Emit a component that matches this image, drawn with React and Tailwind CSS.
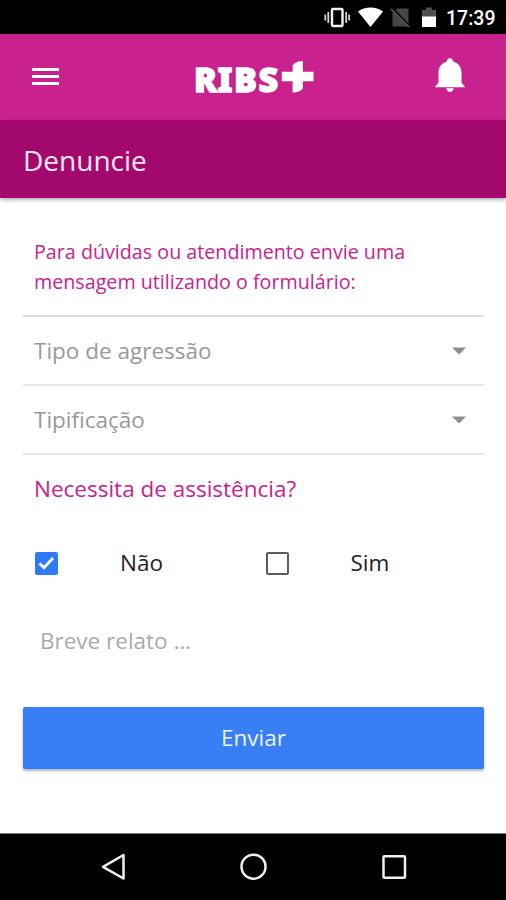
import React, { useState } from "react";

function StatusBar() {
    return (
        <div className="h-[34px] bg-black flex items-center justify-end pr-[11px] text-white">
            <svg width="114" height="34" viewBox="324 0 114 34" fill="none">
                <rect x="332" y="9" width="10.5" height="17" rx="1" stroke="#f2f2f2" strokeWidth="2.4" />
                <path d="M328.3 12v11M325.3 14.5v6M346.2 12v11M349.2 14.5v6" stroke="#d5d5d5" strokeWidth="1.8" />
                <path d="M358 11.5C365 6 376 6 383 11.5L370.5 27z" fill="#fff" />
                <path d="M397 8.5h11.5v18h-16v-13z" fill="#464646" />
                <path d="M391.5 8l18.5 19" stroke="#000" strokeWidth="3" />
                <path d="M391 9l18 18" stroke="#505050" strokeWidth="1.8" />
                <path d="M426 7.500h6v2.500h4v7h-14v-7h4z" fill="#505050" />
                <path d="M422 16.500h14v10.500h-14z" fill="#fff" />
            </svg>
            <span className="ml-2 mt-[3px] w-[49px] font-['Roboto'] text-[19.500px] font-medium leading-none whitespace-nowrap">
                17:39
            </span>
        </div>
    );
}

function Logo() {
    return (
        <svg width="140" height="60" viewBox="184 48 140 60" className="overflow-visible">
            <text
                y="92.500"
                fill="#fff"
                stroke="#fff"
                strokeWidth="1.400"
                className="font-['Noto_Sans',sans-serif] text-[34px] leading-none font-black"
            >
                <tspan x="194">R</tspan>
                <tspan x="217.500">I</tspan>
                <tspan x="234">B</tspan>
                <tspan x="258.500">S</tspan>
            </text>
            <path
                d="M302.800 62v10.700h10.700v9.600h-10.700v7q-3 4.300-10.200 4.300v-11.300h-10.800v-9.600h10.800v-6.200q3-4.500 10.200-4.500z"
                fill="#fff"
            />
        </svg>
    );
}

function Header() {
    return (
        <header className="h-[86px] bg-[#c9228e] flex items-center justify-between pl-8 pr-[38px]">
            <button aria-label="Menu">
                <svg width="27" height="20" viewBox="0 0 27 20" className="block">
                    <path d="M0 2.500h27M0 9.500h27M0 16.500h27" stroke="#fff" strokeWidth="3.200" />
                </svg>
            </button>
            <div className="pl-4">
                <Logo />
            </div>
            <button aria-label="Notificações">
                <svg width="36" height="38" viewBox="432 57.500 36 38" className="block" fill="#fff">
                    <path d="M450 57.800c-2 0-3.200 1.300-3.200 3.300-5 1.500-8.300 5.600-8.300 11v9.400c0 1.600-3.500 4.300-3.500 5.300h30c0-1-3.500-3.700-3.500-5.300v-9.400c0-5.400-3.300-9.500-8.300-11 0-2-1.200-3.300-3.200-3.300z" />
                    <path d="M446.300 87.800h7.400c-.8 5-6.600 5-7.400 0z" />
                </svg>
            </button>
        </header>
    );
}

function SelectRow({ label }) {
    return (
        <div className="h-[69px] border-b-2 border-[#e9e9e9] flex items-center justify-between pl-[11px] pr-[18px] text-[#999]">
            <span className="text-[22.500px]">{label}</span>
            <svg width="14" height="8" viewBox="0 0 14 8">
                <path d="M0 0.500h14L7 7.500z" fill="#8d8d8d" />
            </svg>
        </div>
    );
}

function CheckOption({ label, checked, onChange }) {
    return (
        <button onClick={onChange} className="w-[230.500px] flex items-center pl-3 text-left">
            {checked ? (
                <span className="w-[23px] h-[23px] rounded-[2px] bg-[#2f7bf6] flex items-center justify-center">
                    <svg width="17" height="14" viewBox="0 0 17 14" fill="none">
                        <path d="M1.500 7.500l4.500 4.200L15 2" stroke="#fff" strokeWidth="2.800" />
                    </svg>
                </span>
            ) : (
                <span className="w-[23px] h-[23px] rounded-[2px] border-2 border-[#5c5c5c]" />
            )}
            <span className="ml-[62px] text-[22.500px] text-[#222]">{label}</span>
        </button>
    );
}

function NavBar() {
    return (
        <div className="h-[67px] bg-black border-t border-[#777]">
            <svg width="506" height="66" viewBox="0 834 506 66" fill="none" stroke="#f0f0f0" strokeWidth="2.500">
                <path d="M123.500 855v23.500L103 866.800z" strokeLinejoin="round" />
                <circle cx="253.500" cy="866.700" r="12" />
                <rect x="383.500" y="856.200" width="21.500" height="21.500" rx="1" />
            </svg>
        </div>
    );
}

export default function App() {
    const [assistencia, setAssistencia] = useState("nao");

    return (
        <div className="w-[506px] h-[900px] flex flex-col bg-white overflow-hidden font-['Open_Sans',sans-serif]">
            <StatusBar />
            <Header />
            <div className="h-[78px] bg-[#a3086c] flex items-center pl-[23px] pt-px text-[28px] text-[#fbe6f4] shadow-[0_2px_4px_rgba(0,0,0,0.3)]">
                <h1>Denuncie</h1>
            </div>

            <main className="flex-1 pl-[23px] pr-[22px] pt-[39px]">
                <p className="h-20 border-b-2 border-[#e0e0e0] pl-[11px] text-[19.700px] leading-[30px] text-[#c9228e]">
                    Para dúvidas ou atendimento envie uma
                    <br />
                    mensagem utilizando o formulário:
                </p>
                <SelectRow label="Tipo de agressão" />
                <SelectRow label="Tipificação" />
                <p className="h-[68px] flex items-center pl-[11px] text-[22.500px] text-[#c9228e]">
                    Necessita de assistência?
                </p>
                <div className="h-20 flex items-center">
                    <CheckOption
                        label="Não"
                        checked={assistencia === "nao"}
                        onChange={() => setAssistencia("nao")}
                    />
                    <CheckOption
                        label="Sim"
                        checked={assistencia === "sim"}
                        onChange={() => setAssistencia("sim")}
                    />
                </div>
                <textarea
                    placeholder="Breve relato ..."
                    className="block w-full h-[72px] mt-[21px] pl-[17px] text-[22.500px] leading-[34px] resize-none outline-none placeholder:text-[#aaa]"
                />
                <button className="block w-full h-[62px] mt-[11px] rounded-[2px] bg-[#387ef5] text-[22.500px] text-[#eef4ff] shadow-[0_2px_3px_rgba(0,0,0,0.3)]">
                    Enviar
                </button>
            </main>

            <NavBar />
        </div>
    );
}
